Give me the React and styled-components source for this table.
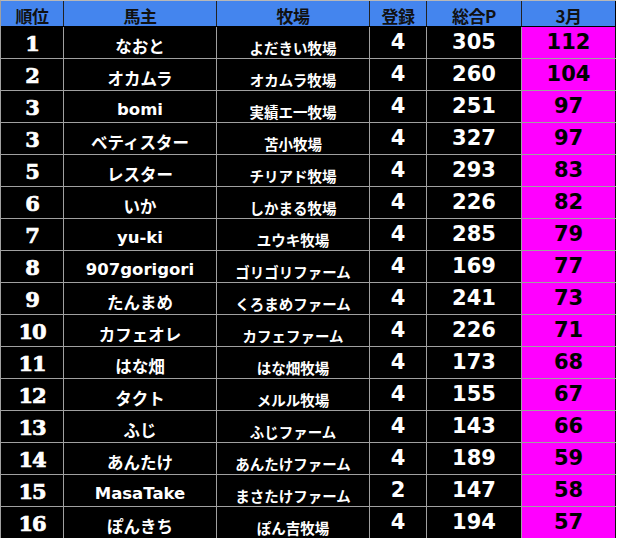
import React from 'react'
import styled, { createGlobalStyle } from 'styled-components'

const GlobalStyle = createGlobalStyle`
    html, body {
        margin: 0;
        padding: 0;
        background: #fff;
    }
`

const COLS = [63, 153, 153, 57, 95, 94]

const Table = styled.div`
    width: 616px;
    border-top: 1px solid #b8b8b8;
    border-left: 1px solid #a0a0a0;
    box-sizing: border-box;
    font-family: "DejaVu Sans", "Noto Sans CJK JP", sans-serif;
    font-weight: bold;
`

const HeaderRow = styled.div`
    display: flex;
    height: 25px;
    background: #4485ee;
    border-bottom: 1px solid #000;
`

const HeadCell = styled.div`
    width: ${p => p.$w}px;
    flex: none;
    box-sizing: border-box;
    border-right: 1px solid ${p => (p.$last ? '#000' : '#222')};
    display: flex;
    justify-content: center;
    align-items: center;
    padding-top: 3px;
    font-family: "Noto Sans CJK JP", sans-serif;
    font-size: 17px;
    color: #111;
    letter-spacing: -0.5px;
`

const Row = styled.div`
    display: flex;
    height: 32px;
    background: #000;
    border-bottom: 1px solid #a0a0a0;
    box-sizing: border-box;
`

const Cell = styled.div`
    width: ${p => p.$w}px;
    flex: none;
    box-sizing: border-box;
    border-right: 1px solid ${p => (p.$last ? '#111' : '#a0a0a0')};
    background: ${p => p.$bg || 'transparent'};
    display: flex;
    justify-content: center;
    align-items: center;
    overflow: hidden;
    white-space: nowrap;
`

const Rank = styled.span`
    font-family: "DejaVu Serif", serif;
    font-weight: 900;
    font-size: 21px;
    color: #fff;
    -webkit-text-stroke: 0.7px #fff;
    letter-spacing: -1px;
    margin-top: 1px;
`

const Name = styled.span`
    font-size: 16.5px;
    color: #fff;
    margin-top: 6px;
`

const Farm = styled.span`
    font-family: "Noto Sans CJK JP", sans-serif;
    font-size: 14.5px;
    color: #fff;
    margin-top: 9px;
`

const Num = styled.span`
    font-size: 21px;
    color: ${p => p.$color || '#fff'};
    margin-bottom: 2px;
`

const rows = [
    [1, 'なおと', 'よだきい牧場', 4, 305, 112],
    [2, 'オカムラ', 'オカムラ牧場', 4, 260, 104],
    [3, 'bomi', '実績エ一牧場', 4, 251, 97],
    [3, 'ベティスター', '苫小牧場', 4, 327, 97],
    [5, 'レスター', 'チリアド牧場', 4, 293, 83],
    [6, 'いか', 'しかまる牧場', 4, 226, 82],
    [7, 'yu-ki', 'ユウキ牧場', 4, 285, 79],
    [8, '907gorigori', 'ゴリゴリファーム', 4, 169, 77],
    [9, 'たんまめ', 'くろまめファーム', 4, 241, 73],
    [10, 'カフェオレ', 'カフェファーム', 4, 226, 71],
    [11, 'はな畑', 'はな畑牧場', 4, 173, 68],
    [12, 'タクト', 'メルル牧場', 4, 155, 67],
    [13, 'ふじ', 'ふじファーム', 4, 143, 66],
    [14, 'あんたけ', 'あんたけファーム', 4, 189, 59],
    [15, 'MasaTake', 'まさたけファーム', 2, 147, 58],
    [16, 'ぽんきち', 'ぽん吉牧場', 4, 194, 57],
]

const headers = ['順位', '馬主', '牧場', '登録', '総合P', '3月']

const App = () => {
    return (
        <>
            <GlobalStyle />
            <Table>
                <HeaderRow>
                    {headers.map((h, i) => (
                        <HeadCell key={h} $w={COLS[i]} $last={i === 5}>{h}</HeadCell>
                    ))}
                </HeaderRow>
                {rows.map(([rank, name, farm, reg, total, month], i) => (
                    <Row key={i}>
                        <Cell $w={COLS[0]}><Rank>{rank}</Rank></Cell>
                        <Cell $w={COLS[1]}><Name>{name}</Name></Cell>
                        <Cell $w={COLS[2]}><Farm>{farm}</Farm></Cell>
                        <Cell $w={COLS[3]}><Num>{reg}</Num></Cell>
                        <Cell $w={COLS[4]}><Num>{total}</Num></Cell>
                        <Cell $w={COLS[5]} $bg="#ff00ff" $last><Num $color="#000">{month}</Num></Cell>
                    </Row>
                ))}
            </Table>
        </>
    )
}

export default App
